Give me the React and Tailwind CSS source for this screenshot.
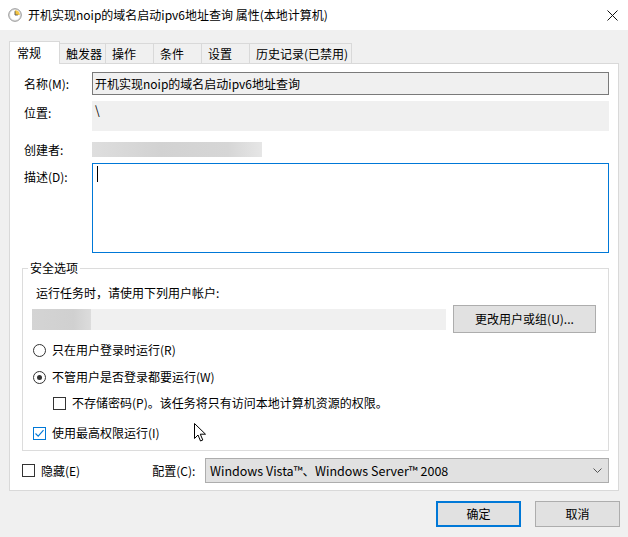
import React from "react";

function ClockIcon() {
  return (
    <svg width="14" height="14" viewBox="0 0 14 14">
      <circle cx="7" cy="7" r="6.3" fill="#e8e8e8" stroke="#8a8a8a" strokeWidth="0.9" />
      <circle cx="7" cy="7" r="4.8" fill="#ffffff" />
      <path d="M7 7 L7 2.2 A4.8 4.8 0 0 1 11.8 7 Z" fill="#f4c542" />
      <path d="M7 7 L7 3.2 M7 7 L9.8 7" stroke="#555" strokeWidth="0.9" />
    </svg>
  );
}

function Radio({ checked }) {
  return (
    <span className="w-[13px] h-[13px] rounded-full border border-[#333333] bg-white flex items-center justify-center shrink-0">
      {checked && <span className="w-[5px] h-[5px] rounded-full bg-[#333333]" />}
    </span>
  );
}

function Check({ checked }) {
  return (
    <span
      className={
        checked
          ? "w-[13px] h-[13px] border border-[#0078d7] bg-white flex items-center justify-center shrink-0"
          : "w-[13px] h-[13px] border border-[#333333] bg-white shrink-0"
      }
    >
      {checked && (
        <svg width="11" height="11" viewBox="0 0 11 11">
          <path d="M1.5 5.5 L4.2 8.2 L9.5 2.2" fill="none" stroke="#0078d7" strokeWidth="1.1" />
        </svg>
      )}
    </span>
  );
}

export default function App() {
  const tabs = [
    { t: "触发器", w: "w-[46px]" },
    { t: "操作", w: "w-[48px]" },
    { t: "条件", w: "w-[48px]" },
    { t: "设置", w: "w-[48px]" },
    { t: "历史记录(已禁用)", w: "w-[102px]" },
  ];
  return (
    <div className="relative w-[628px] h-[537px] bg-[#f0f0f0] overflow-hidden text-[12px] leading-[16px] text-black font-['Noto_Sans_CJK_SC','Microsoft_YaHei',sans-serif]">
      {/* Title bar */}
      <div className="h-[30px] bg-white flex items-center">
        <span className="ml-[8px] flex"><ClockIcon /></span>
        <span className="ml-[6px]">开机实现noip的域名启动ipv6地址查询 属性(本地计算机)</span>
        <span className="ml-auto mr-[10px] flex">
          <svg width="11" height="11" viewBox="0 0 11 11">
            <path d="M0.5 0.5 L10.5 10.5 M10.5 0.5 L0.5 10.5" stroke="#111" strokeWidth="1" />
          </svg>
        </span>
      </div>

      {/* Tabs */}
      <div className="mt-[11px] px-[9px] flex items-end h-[22px]">
        <div className="relative z-10 w-[51px] h-[23px] -mb-px bg-white border-x border-t border-[#d9d9d9] pl-[7px] pt-[3px]">
          常规
        </div>
        {tabs.map((tb, i) => (
          <div
            key={tb.t}
            className={
              tb.w +
              " h-[20px] border-t border-r border-[#d9d9d9] bg-[#f0f0f0] pl-[6px] pt-[2px]" +
              (i === 0 ? " border-l-0" : "")
            }
          >
            {tb.t}
          </div>
        ))}
      </div>

      {/* Panel */}
      <div className="mx-[9px] h-[428px] bg-white border border-[#d9d9d9] pl-[12px] pr-[9px] pt-[8px] flex flex-col">
        <div className="pl-[2px] grid grid-cols-[68px_1fr]">
          <div className="h-[23px] flex items-center">名称(M):</div>
          <div className="h-[23px] border border-[#7a7a7a] bg-[#f0f0f0] flex items-center pl-[2px]">
            开机实现noip的域名启动ipv6地址查询
          </div>

          <div className="mt-[6px] pt-[4px]">位置:</div>
          <div className="mt-[6px] h-[30px] bg-[#f0f0f0] pl-[3px] pt-[1px]">\</div>

          <div className="mt-[11px] h-[15px] flex items-center">创建者:</div>
          <div className="mt-[11px] h-[15px] flex">
            <div className="w-[170px] h-[15px] bg-[linear-gradient(90deg,#dedede,#d2d2d2_40%,#d6d6d6_80%,#e6e6e6)]" />
          </div>

          <div className="mt-[6px] pt-[6px]">描述(D):</div>
          <div className="mt-[6px] h-[90px] border border-[#0078d7] bg-white pl-[4px] pt-[2px]">
            <div className="w-px h-[16px] bg-black" />
          </div>
        </div>

        {/* Security group */}
        <div className="mt-[15px] h-[183px] border border-[#dcdcdc] flex flex-col">
          <div className="-mt-[9px] ml-[5px] self-start bg-white px-[2px]">安全选项</div>
          <div className="mt-[9px] pl-[13px]">运行任务时，请使用下列用户帐户:</div>
          <div className="mt-[4px] pl-[9px] pr-[12px] flex items-center">
            <div className="w-[414px] h-[21px] bg-[#f0f0f0] flex">
              <div className="w-[59px] h-[21px] bg-[linear-gradient(90deg,#d4d4d4,#d0d0d0_70%,#dcdcdc)]" />
            </div>
            <div className="ml-auto w-[143px] h-[28px] bg-[#e1e1e1] border border-[#adadad] flex items-center justify-center">
              更改用户或组(U)...
            </div>
          </div>
          <div className="mt-[9px] pl-[10px] flex items-center h-[16px]">
            <Radio />
            <span className="ml-[6px]">只在用户登录时运行(R)</span>
          </div>
          <div className="mt-[11px] pl-[10px] flex items-center h-[16px]">
            <Radio checked />
            <span className="ml-[6px]">不管用户是否登录都要运行(W)</span>
          </div>
          <div className="mt-[10px] pl-[30px] flex items-center h-[16px]">
            <Check />
            <span className="ml-[6px]">不存储密码(P)。该任务将只有访问本地计算机资源的权限。</span>
          </div>
          <div className="mt-[14px] pl-[10px] flex items-center h-[16px]">
            <Check checked />
            <span className="ml-[6px]">使用最高权限运行(I)</span>
          </div>
        </div>

        {/* Bottom row */}
        <div className="mt-[7px] flex items-center h-[25px]">
          <Check />
          <span className="ml-[6px]">隐藏(E)</span>
          <span className="ml-[72px]">配置(C):</span>
          <div className="ml-auto w-[404px] h-[25px] bg-[#e1e1e1] border border-[#adadad] flex items-center pl-[4px] pr-[6px]">
            <span className="text-[12.5px]">Windows Vista™、Windows Server™ 2008</span>
            <svg className="ml-auto" width="9" height="6" viewBox="0 0 9 6">
              <path d="M0.5 0.5 L4.5 4.5 L8.5 0.5" fill="none" stroke="#555" strokeWidth="1" />
            </svg>
          </div>
        </div>
      </div>

      {/* Dialog buttons */}
      <div className="mt-[10px] pr-[8px] flex justify-end gap-[14px]">
        <div className="w-[85px] h-[26px] bg-[#e1e1e1] border-2 border-[#0078d7] flex items-center justify-center">确定</div>
        <div className="w-[85px] h-[26px] bg-[#e1e1e1] border border-[#adadad] flex items-center justify-center">取消</div>
      </div>

      {/* Mouse cursor overlay */}
      <svg className="absolute left-[194px] top-[423px]" width="13" height="20" viewBox="0 0 13 20">
        <path d="M0.5 0.5 L0.5 15.5 L4 12 L6.5 18 L8.8 17 L6.3 11.2 L11.5 11.2 Z" fill="#fff" stroke="#000" strokeWidth="1" strokeLinejoin="round" />
      </svg>
    </div>
  );
}
